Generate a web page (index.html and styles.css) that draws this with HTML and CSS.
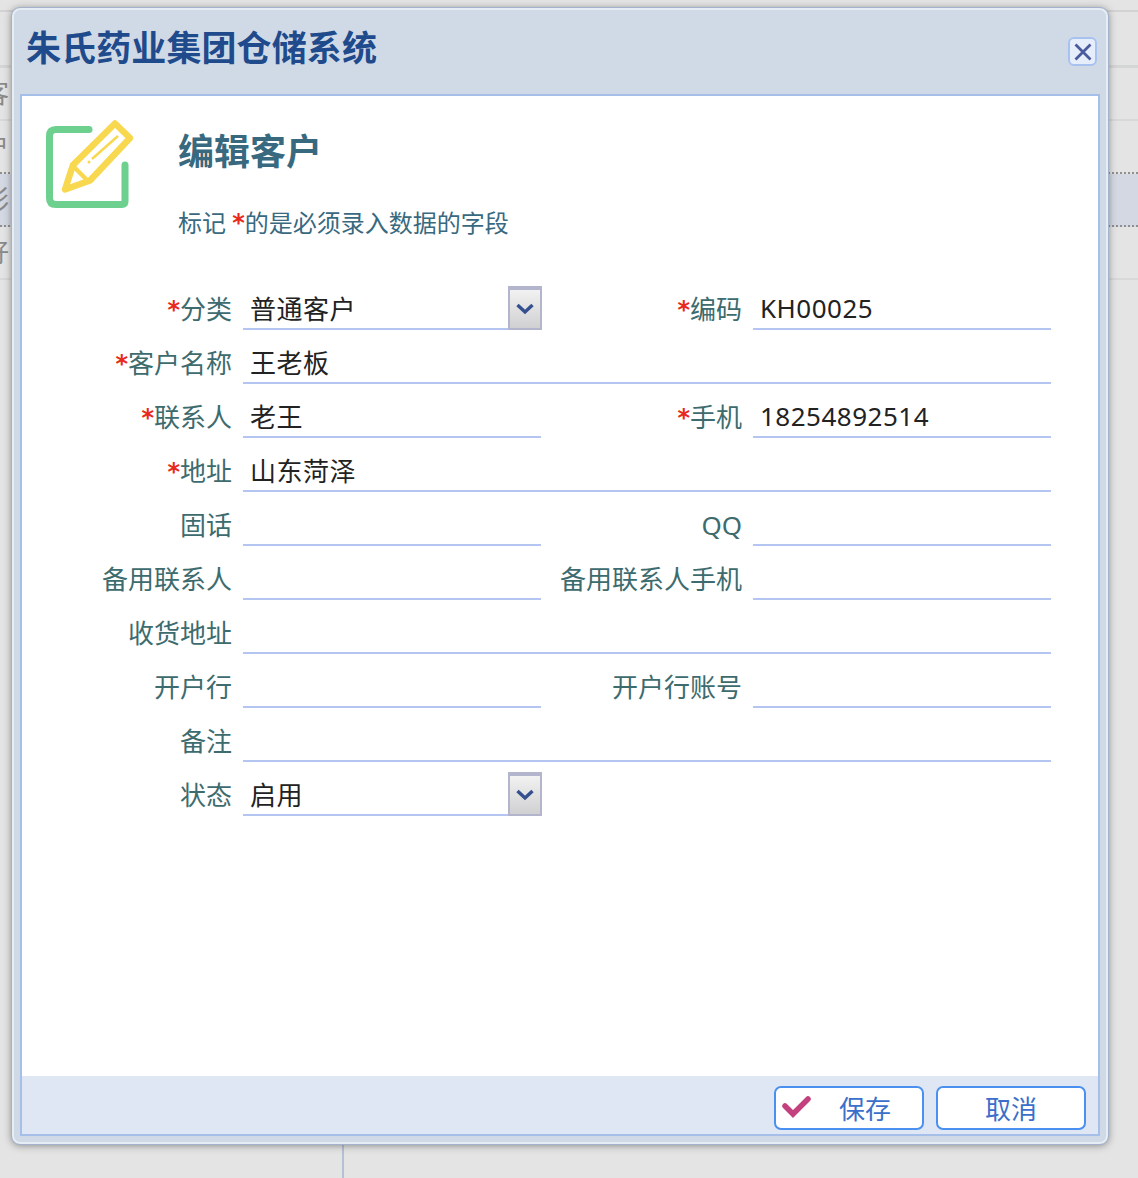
FILE: index.html
```html
<!DOCTYPE html>
<html lang="zh-CN">
<head>
  <meta charset="UTF-8" />
  <meta name="viewport" content="width=device-width, initial-scale=1.0" />
  <title>编辑客户</title>
  <link rel="stylesheet" href="styles.css">
</head>
<body>

  <!-- page behind the dialog -->
  <div class="backdrop">
    <div class="bg-row bg-row-head"></div>
    <div class="bg-row">客</div>
    <div class="bg-row bg-row-dotted">户</div>
    <div class="bg-row bg-row-dotted bg-row-selected">彩</div>
    <div class="bg-row">好</div>
    <div class="bg-divider"></div>
  </div>

  <div class="dialog">
    <div class="dialog-head">
      <div class="dialog-title">朱氏药业集团仓储系统</div>
      <button class="close-btn" aria-label="关闭">
        <svg width="20" height="20" viewBox="0 0 20 20">
          <path d="M2.500 2.500L17.500 17.500M17.500 2.500L2.500 17.500" stroke="#4a5a9c" stroke-width="2.800" fill="none" />
        </svg>
      </button>
    </div>

    <div class="dialog-body">
      <div class="form-head">
        <svg class="edit-icon" width="90" height="90" viewBox="0 0 90 90">
          <path d="M43 9.500H10Q3.500 9.500 3.500 16V78Q3.500 84.500 10 84.500H76Q79 84.500 79 81.500V45" fill="none" stroke="#6dd08e" stroke-width="7" stroke-linecap="round" />
          <path d="M19 69.500L27 45L69 3.500L84 18L44 60.500Z" fill="#fff" stroke="#f7d84f" stroke-width="6.500" stroke-linejoin="round" />
          <path d="M27 46L43 62" stroke="#f7d84f" stroke-width="4.500" />
          <path d="M46 39L72 16" stroke="#f7d84f" stroke-width="2.500" />
          <circle cx="43" cy="42" r="1.500" fill="#f7d84f" />
        </svg>
        <div class="form-intro">
          <h2>编辑客户</h2>
          <p>标记 <span class="req">*</span>的是必须录入数据的字段</p>
        </div>
      </div>

      <form class="form-grid">
        <label><span class="req">*</span>分类</label>
        <div class="combo">
          <input type="text" value="普通客户">
          <span class="combo-arrow">
            <svg width="20" height="12" viewBox="0 0 20 12"><path d="M2.500 2L10 9L17.500 2" fill="none" stroke="#35508f" stroke-width="3.400" /></svg>
          </span>
        </div>
        <label><span class="req">*</span>编码</label>
        <input type="text" value="KH00025">

        <label><span class="req">*</span>客户名称</label>
        <input class="wide" type="text" value="王老板">

        <label><span class="req">*</span>联系人</label>
        <input type="text" value="老王">
        <label><span class="req">*</span>手机</label>
        <input type="text" value="18254892514">

        <label><span class="req">*</span>地址</label>
        <input class="wide" type="text" value="山东菏泽">

        <label>固话</label>
        <input type="text">
        <label>QQ</label>
        <input type="text">

        <label>备用联系人</label>
        <input type="text">
        <label>备用联系人手机</label>
        <input type="text">

        <label>收货地址</label>
        <input class="wide" type="text">

        <label>开户行</label>
        <input type="text">
        <label>开户行账号</label>
        <input type="text">

        <label>备注</label>
        <input class="wide" type="text">

        <label>状态</label>
        <div class="combo">
          <input type="text" value="启用">
          <span class="combo-arrow">
            <svg width="20" height="12" viewBox="0 0 20 12"><path d="M2.500 2L10 9L17.500 2" fill="none" stroke="#35508f" stroke-width="3.400" /></svg>
          </span>
        </div>
      </form>

      <div class="dialog-foot">
        <button class="btn btn-save">
          <svg class="check-icon" width="30" height="26" viewBox="0 0 30 26">
            <path d="M3 12L11 20L26 5" fill="none" stroke="#c2417e" stroke-width="5.500" stroke-linecap="round" />
          </svg>
          保存
        </button>
        <button class="btn">取消</button>
      </div>
    </div>
  </div>

</body>
</html>
```

FILE: styles.css
```css
* {
  box-sizing: border-box;
  margin: 0;
  padding: 0;
}

body {
  background: #e4e4e4;
  font-family: "Noto Sans", "Noto Sans CJK SC", sans-serif;
  height: 1178px;
  overflow: hidden;
  position: relative;
}

.backdrop {
  position: absolute;
  inset: 0;
  overflow: hidden;
}

.bg-row {
  height: 53px;
  border-bottom: 2px solid #d8d8d8;
  color: #8a8a8a;
  font-size: 26px;
  line-height: 51px;
  text-indent: -17px;
}

.bg-row-head {
  height: 58px;
  margin-top: 10px;
  border-top: 2px solid #d2d2d2;
  border-bottom: 3px solid #d4d6d6;
}

.bg-row-dotted {
  border-bottom: 2px dotted #8f8f8f;
}

.bg-row-selected {
  background: #d4d8e2;
}

.bg-divider {
  position: absolute;
  left: 342px;
  top: 1140px;
  bottom: 0;
  width: 2px;
  background: #b5c0d6;
}

.dialog {
  position: absolute;
  left: 11px;
  top: 7px;
  width: 1098px;
  height: 1138px;
  display: flex;
  flex-direction: column;
  background: #d0dae6;
  border: 1px solid #a3b3cc;
  border-radius: 9px;
  box-shadow: inset 0 0 0 2px #e6edf5, 0 1px 7px rgba(60, 60, 60, 0.5);
  padding: 0 8px 8px;
}

.dialog-head {
  height: 86px;
  flex: none;
  display: flex;
  justify-content: space-between;
  padding: 0 3px 0 6px;
}

.dialog-title {
  color: #1f4a8c;
  font-size: 35px;
  font-weight: 700;
  letter-spacing: 0.1px;
  line-height: 80px;
}

.close-btn {
  width: 29px;
  height: 29px;
  margin-top: 29px;
  display: flex;
  align-items: center;
  justify-content: center;
  background: #e6eefc;
  border: 2px solid #a8c2f0;
  border-radius: 6px;
}

.dialog-body {
  flex: 1;
  display: flex;
  flex-direction: column;
  background: #fff;
  border: 2px solid #a5bfe8;
}

.form-head {
  display: flex;
  padding: 24px 0 0 24px;
  height: 180px;
  flex: none;
}

.edit-icon {
  flex: none;
}

.form-intro {
  margin-left: 42px;
  color: #38697f;
}

.form-intro h2 {
  font-size: 36px;
  font-weight: 700;
  line-height: 60px;
  margin-top: 2px;
}

.form-intro p {
  font-size: 24px;
  line-height: 34px;
  margin-top: 24px;
}

.req {
  color: #e8291c;
  font-family: "DejaVu Sans", sans-serif;
  font-size: 24px;
  font-weight: 700;
  line-height: 0;
  vertical-align: 1px;
}

.form-grid {
  display: grid;
  grid-template-columns: 210px 298px 190px 298px;
  grid-auto-rows: 44px;
  column-gap: 11px;
  row-gap: 10px;
  flex: 1;
  align-content: start;
  padding-top: 10px;
}

.form-grid label {
  color: #3d6b6e;
  font-size: 26px;
  line-height: 44px;
  padding-top: 1px;
  text-align: right;
  white-space: nowrap;
}

.form-grid input {
  width: 100%;
  height: 44px;
  border: none;
  border-bottom: 2px solid #b4c5f2;
  outline: none;
  background: transparent;
  color: #222;
  font-family: inherit;
  font-size: 26px;
  letter-spacing: 0.5px;
  padding: 1px 7px 0;
}

.form-grid input.wide {
  grid-column: 2 / 5;
}

.combo {
  position: relative;
  height: 44px;
}

.combo-arrow {
  position: absolute;
  right: -1px;
  top: 0;
  width: 34px;
  height: 44px;
  display: flex;
  align-items: center;
  justify-content: center;
  background: linear-gradient(#f2f2f2, #d0d0d2);
  border: 2px solid #b3b5cc;
  border-top-width: 4px;
}

.dialog-foot {
  height: 58px;
  flex: none;
  display: flex;
  justify-content: flex-end;
  gap: 12px;
  padding: 10px 12px 0 0;
  background: #e0e7f4;
}

.btn {
  position: relative;
  width: 150px;
  height: 44px;
  background: #fff;
  border: 2px solid #4a90f0;
  border-radius: 7px;
  color: #3b6fc9;
  font-family: inherit;
  font-size: 26px;
}

.btn-save {
  padding-left: 32px;
}

.check-icon {
  position: absolute;
  left: 6px;
  top: 6px;
}
```
